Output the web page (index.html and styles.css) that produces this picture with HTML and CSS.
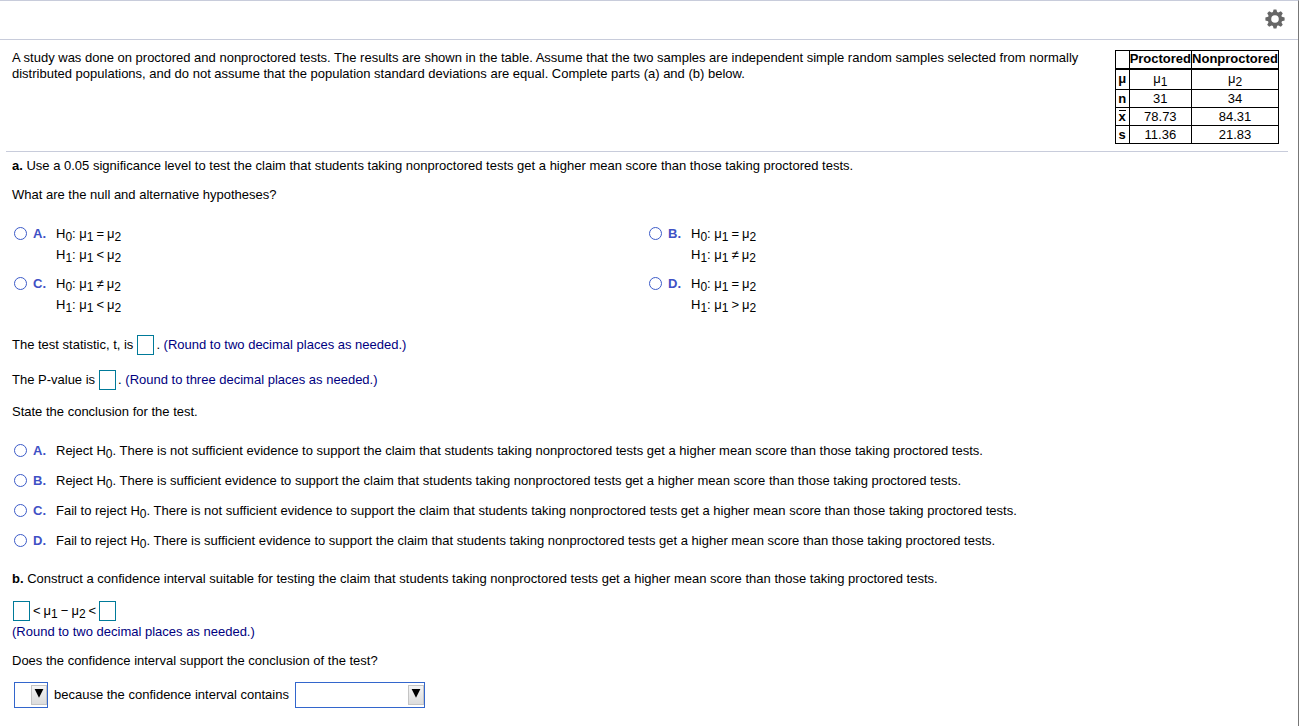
FILE: index.html
```html
<!DOCTYPE html>
<html lang="en">
<head>
    <meta charset="UTF-8">
    <meta name="viewport" content="width=device-width, initial-scale=1.0">
    <title>Proctored and Nonproctored Tests</title>
    <link rel="stylesheet" href="styles.css">
</head>
<body>

    <header class="toolbar">
        <button class="settings" type="button" aria-label="Settings">
            <svg width="20" height="20" viewBox="0 0 20 20" aria-hidden="true">
                <g fill="#666">
                    <path d="M8.6 .4h2.8l1 3.6v12l-1 3.6H8.6l-1-3.6V4z"/>
                    <path d="M8.6 .4h2.8l1 3.6v12l-1 3.6H8.6l-1-3.6V4z" transform="rotate(45 10 10)"/>
                    <path d="M8.6 .4h2.8l1 3.6v12l-1 3.6H8.6l-1-3.6V4z" transform="rotate(90 10 10)"/>
                    <path d="M8.6 .4h2.8l1 3.6v12l-1 3.6H8.6l-1-3.6V4z" transform="rotate(135 10 10)"/>
                    <circle cx="10" cy="10" r="7.2"/>
                </g>
                <circle cx="10" cy="10" r="3.8" fill="#fff"/>
            </svg>
        </button>
    </header>

    <main>
        <section class="intro">
            <p>A study was done on proctored and nonproctored tests. The results are shown in the table. Assume that the two samples are independent simple random samples selected from normally distributed populations, and do not assume that the population standard deviations are equal. Complete parts (a) and (b) below.</p>
            <table class="results">
                <thead>
                    <tr><th></th><th scope="col">Proctored</th><th scope="col">Nonproctored</th></tr>
                </thead>
                <tbody>
                    <tr class="mu"><th scope="row">μ</th><td>μ<sub>1</sub></td><td>μ<sub>2</sub></td></tr>
                    <tr><th scope="row">n</th><td>31</td><td>34</td></tr>
                    <tr><th scope="row"><span class="bar">x</span></th><td>78.73</td><td>84.31</td></tr>
                    <tr><th scope="row">s</th><td>11.36</td><td>21.83</td></tr>
                </tbody>
            </table>
        </section>

        <section class="questions">
            <p><b>a.</b> Use a 0.05 significance level to test the claim that students taking nonproctored tests get a higher mean score than those taking proctored tests.</p>
            <p>What are the null and alternative hypotheses?</p>

            <div class="hypotheses">
                <label class="choice">
                    <input type="radio" name="hypotheses">
                    <span class="letter">A.</span>
                    <span class="math">H<sub>0</sub>: μ<sub>1</sub><i>=</i>μ<sub>2</sub><br>H<sub>1</sub>: μ<sub>1</sub><i>&lt;</i>μ<sub>2</sub></span>
                </label>
                <label class="choice">
                    <input type="radio" name="hypotheses">
                    <span class="letter">B.</span>
                    <span class="math">H<sub>0</sub>: μ<sub>1</sub><i>=</i>μ<sub>2</sub><br>H<sub>1</sub>: μ<sub>1</sub><i>≠</i>μ<sub>2</sub></span>
                </label>
                <label class="choice">
                    <input type="radio" name="hypotheses">
                    <span class="letter">C.</span>
                    <span class="math">H<sub>0</sub>: μ<sub>1</sub><i>≠</i>μ<sub>2</sub><br>H<sub>1</sub>: μ<sub>1</sub><i>&lt;</i>μ<sub>2</sub></span>
                </label>
                <label class="choice">
                    <input type="radio" name="hypotheses">
                    <span class="letter">D.</span>
                    <span class="math">H<sub>0</sub>: μ<sub>1</sub><i>=</i>μ<sub>2</sub><br>H<sub>1</sub>: μ<sub>1</sub><i>&gt;</i>μ<sub>2</sub></span>
                </label>
            </div>

            <div class="answer">
                <label for="statistic">The test statistic, t, is</label>
                <input class="box" type="text" id="statistic">
                <span>. <span class="hint">(Round to two decimal places as needed.)</span></span>
            </div>
            <div class="answer">
                <label for="pvalue">The P-value is</label>
                <input class="box" type="text" id="pvalue">
                <span>. <span class="hint">(Round to three decimal places as needed.)</span></span>
            </div>

            <p>State the conclusion for the test.</p>

            <div class="conclusions">
                <label class="choice">
                    <input type="radio" name="conclusion">
                    <span class="letter">A.</span>
                    <span>Reject H<sub>0</sub>. There is not sufficient evidence to support the claim that students taking nonproctored tests get a higher mean score than those taking proctored tests.</span>
                </label>
                <label class="choice">
                    <input type="radio" name="conclusion">
                    <span class="letter">B.</span>
                    <span>Reject H<sub>0</sub>. There is sufficient evidence to support the claim that students taking nonproctored tests get a higher mean score than those taking proctored tests.</span>
                </label>
                <label class="choice">
                    <input type="radio" name="conclusion">
                    <span class="letter">C.</span>
                    <span>Fail to reject H<sub>0</sub>. There is not sufficient evidence to support the claim that students taking nonproctored tests get a higher mean score than those taking proctored tests.</span>
                </label>
                <label class="choice">
                    <input type="radio" name="conclusion">
                    <span class="letter">D.</span>
                    <span>Fail to reject H<sub>0</sub>. There is sufficient evidence to support the claim that students taking nonproctored tests get a higher mean score than those taking proctored tests.</span>
                </label>
            </div>

            <p><b>b.</b> Construct a confidence interval suitable for testing the claim that students taking nonproctored tests get a higher mean score than those taking proctored tests.</p>

            <div class="interval">
                <input class="box" type="text" aria-label="Lower limit">
                <span class="math"><i>&lt;</i>μ<sub>1</sub><i>−</i>μ<sub>2</sub><i>&lt;</i></span>
                <input class="box" type="text" aria-label="Upper limit">
            </div>
            <p class="hint">(Round to two decimal places as needed.)</p>

            <p>Does the confidence interval support the conclusion of the test?</p>

            <div class="support">
                <span class="dropdown short">
                    <select id="support" aria-label="Yes or no"><option></option></select>
                    <svg width="16" height="20" viewBox="0 0 16 20" aria-hidden="true"><path d="M3 3h10L8 13z"/></svg>
                </span>
                <label for="contains">because the confidence interval contains</label>
                <span class="dropdown long">
                    <select id="contains"><option></option></select>
                    <svg width="16" height="20" viewBox="0 0 16 20" aria-hidden="true"><path d="M3 3h10L8 13z"/></svg>
                </span>
            </div>
        </section>
    </main>

</body>
</html>
```

FILE: styles.css
```css
* {
    box-sizing: border-box;
}
body {
    font-family: "Liberation Sans", Arial, sans-serif;
    font-size: 13px;
    line-height: 16px;
    color: #000;
    background-color: #fff;
    margin: 0;
    min-height: 100vh;
    border-top: 1px solid #c8ccdb;
    border-right: 1px solid #777;
}
p {
    margin: 0;
}
sub {
    font-size: 12px;
    line-height: 0;
    vertical-align: -3px;
}
.toolbar {
    display: flex;
    justify-content: flex-end;
    align-items: center;
    height: 39px;
    padding: 0 13px 2px 0;
    border-bottom: 1px solid #c8ccdb;
}
.settings {
    display: flex;
    padding: 0;
    border: none;
    background: none;
    cursor: pointer;
}
.intro {
    display: flex;
    justify-content: space-between;
    align-items: flex-start;
    gap: 32px;
    margin: 0 10px 0 6px;
    padding: 10px 9px 7px 6px;
    border-bottom: 1px solid #c8ccdb;
}
.results {
    flex: none;
    border-collapse: collapse;
    text-align: center;
}
.results th,
.results td {
    height: 18px;
    padding: 0;
    border: 1px solid #000;
    line-height: 16px;
}
.results th {
    min-width: 14px;
}
.results thead th {
    border-bottom-width: 2px;
}
.results .mu td,
.results .mu th {
    height: 21px;
}
.bar {
    display: inline-block;
    line-height: 11px;
    border-top: 1px solid #000;
}
.questions {
    padding: 6px 12px 16px;
}
.questions p + p {
    margin-top: 13px;
}
.choice {
    display: flex;
    align-items: flex-start;
}
.choice input {
    flex: none;
    appearance: none;
    width: 13px;
    height: 13px;
    margin: 1px 6px 0 2px;
    border: 1px solid #3c5bc8;
    border-radius: 50%;
    background-color: #fff;
}
.choice input:checked {
    background-color: #3c5bc8;
}
.letter {
    flex: none;
    width: 23px;
    color: #3f51c5;
    font-weight: bold;
}
.math i {
    font-style: normal;
    margin: 0 3px;
}
.hypotheses {
    display: grid;
    grid-template-columns: 1fr 1fr;
    row-gap: 11px;
    margin: 23px 4px 20px 0;
}
.hypotheses .math {
    margin-top: -3px;
    line-height: 21px;
}
.answer {
    display: flex;
    align-items: center;
    gap: 4px;
    margin-bottom: 15px;
}
.box {
    width: 17px;
    height: 20px;
    padding: 0 2px;
    border: 1px solid #007a99;
    background-color: #fff;
    font: inherit;
}
.answer .box {
    margin-right: -2px;
}
.hint {
    color: #000080;
}
.answer + p {
    margin-top: -1px;
}
.conclusions {
    display: grid;
    gap: 14px;
    margin: 23px 0 22px;
}
.interval {
    display: flex;
    align-items: center;
    margin: 14px 0 3px 1px;
}
.support {
    display: flex;
    align-items: center;
    gap: 6px;
    margin: 13px 0 0 2px;
}
.dropdown {
    position: relative;
    display: flex;
    height: 26px;
}
.short {
    width: 34px;
}
.long {
    width: 130px;
}
.dropdown select {
    appearance: none;
    width: 100%;
    padding: 0 18px 0 4px;
    border: 1px solid #3366cc;
    border-radius: 0;
    background-color: #fff;
    font: inherit;
}
.dropdown svg {
    position: absolute;
    top: 3px;
    right: 1px;
    border: 1px solid #c4c4c4;
    background: linear-gradient(#f4f4f4, #dcdcdc);
    pointer-events: none;
}
```
